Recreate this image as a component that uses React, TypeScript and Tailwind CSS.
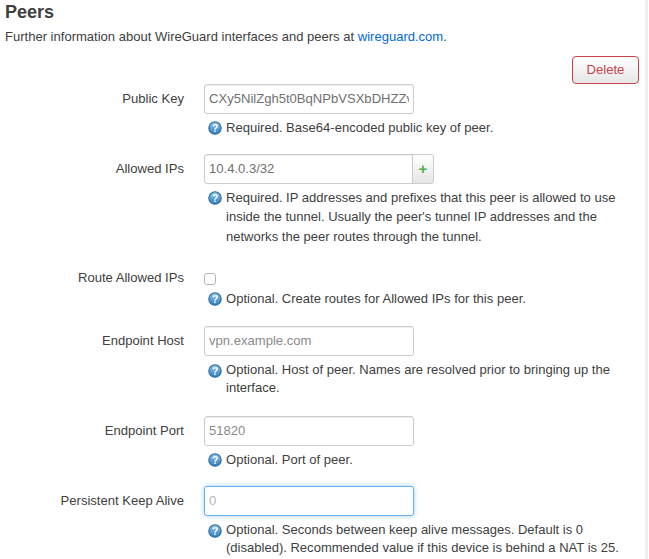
// Peers section of the WireGuard interface settings page

function HelpIcon() {
  return (
    <svg viewBox="0 0 14 14" className="w-[14px] h-[14px] shrink-0 mt-[3px]">
      <defs>
        <linearGradient id="help" x1="0" y1="0" x2="0" y2="1">
          <stop offset="0" stopColor="#8fc3e8" />
          <stop offset="1" stopColor="#2f7fc0" />
        </linearGradient>
      </defs>
      <circle cx="7" cy="7" r="6.2" fill="url(#help)" stroke="#2f6a99" strokeWidth="1.1" />
      <text x="7" y="10.6" textAnchor="middle" fontSize="10" fontWeight="700" fill="#fff" fontFamily="Liberation Sans, sans-serif">?</text>
    </svg>
  );
}

function Help({ lines, tight }: { lines: string[]; tight?: boolean }) {
  return (
    <div className={`flex gap-[4px] ml-[4px] text-[13.04px] text-[#404040] ${tight ? "mt-[5px] leading-[18px]" : "mt-[4px] leading-[19.5px]"}`}>
      <HelpIcon />
      <div>
        {lines.map((line) => (
          <div key={line} className="whitespace-nowrap">{line}</div>
        ))}
      </div>
    </div>
  );
}

interface RowProps {
  label: string;
  lines: string[];
  children: React.ReactNode;
  className?: string;
  tight?: boolean;
}

function Row({ label, lines, children, className, tight }: RowProps) {
  return (
    <div className={`flex ${className ?? ""}`}>
      <div className="w-[184px] shrink-0 text-right text-[13.07px] leading-[29px] text-[#404040]">{label}</div>
      <div className="ml-[20px]">
        {children}
        <Help lines={lines} tight={tight} />
      </div>
    </div>
  );
}

function TextInput({ value, placeholder, focused }: { value?: string; placeholder?: string; focused?: boolean }) {
  return (
    <div
      className={`w-[210px] h-[30px] px-[4px] rounded-[3px] border bg-white text-[13.07px] leading-[28px] ${
        focused
          ? "border-[#66afe9] shadow-[0_0_5px_rgba(102,175,233,0.6)] text-[#b5b5b5]"
          : "border-[#ccc] shadow-[inset_0_1px_1px_rgba(0,0,0,0.07)] " + (value ? "text-[#707070]" : "text-[#8a8a8a]")
      }`}
    >
      <div className="overflow-hidden whitespace-nowrap">{value ?? placeholder}</div>
    </div>
  );
}

export default function App() {
  return (
    <div className="relative w-[649px] h-[559px] overflow-hidden bg-white font-['Liberation_Sans',Arial,sans-serif] text-[#404040]">
      <div className="absolute right-[1px] top-0 bottom-0 w-[3px] bg-[#eee]" />

      <h3 className="pl-[5px] pt-[1px] text-[18px] leading-[22px] font-bold text-[#404040]">Peers</h3>
      <p className="pl-[5px] mt-[4px] text-[13.04px] leading-[20px]">
        Further information about WireGuard interfaces and peers at{" "}
        <a className="text-[#0069d6]">wireguard.com</a>.
      </p>

      <div className="flex justify-end mt-[9px] pr-[10px]">
        <button className="w-[67px] h-[28px] rounded-[4px] border border-[#c9434a] bg-gradient-to-b from-white to-[#e6e6e6] text-[13.07px] text-[#c9434a]">
          Delete
        </button>
      </div>

      <Row
        label="Public Key"
        lines={["Required. Base64-encoded public key of peer."]}
      >
        <TextInput value="CXy5NilZgh5t0BqNPbVSXbDHZZv" />
      </Row>

      <Row
        className="mt-[16px]"
        label="Allowed IPs"
        lines={[
          "Required. IP addresses and prefixes that this peer is allowed to use",
          "inside the tunnel. Usually the peer's tunnel IP addresses and the",
          "networks the peer routes through the tunnel.",
        ]}
      >
        <div className="flex">
          <div className="w-[209px] h-[30px] px-[4px] rounded-l-[3px] border border-[#ccc] bg-white text-[13.07px] leading-[28px] text-[#707070] shadow-[inset_0_1px_1px_rgba(0,0,0,0.07)]">
            10.4.0.3/32
          </div>
          <button className="w-[22px] h-[30px] -ml-px rounded-r-[3px] border border-[#ccc] bg-gradient-to-b from-white to-[#e6e6e6] text-[15px] leading-[26px] font-bold text-[#4cae4c]">
            +
          </button>
        </div>
      </Row>

      <Row
        className="mt-[17px]"
        label="Route Allowed IPs"
        lines={["Optional. Create routes for Allowed IPs for this peer."]}
      >
        <div className="h-[22px] pt-[10px]">
          <span className="block w-[12px] h-[12px] rounded-[3px] border border-[#b5b5b5] bg-white" />
        </div>
      </Row>

      <Row
        className="mt-[17px]"
        tight
        label="Endpoint Host"
        lines={[
          "Optional. Host of peer. Names are resolved prior to bringing up the",
          "interface.",
        ]}
      >
        <TextInput placeholder="vpn.example.com" />
      </Row>

      <Row
        className="mt-[19px]"
        label="Endpoint Port"
        lines={["Optional. Port of peer."]}
      >
        <TextInput placeholder="51820" />
      </Row>

      <Row
        className="mt-[17px]"
        tight
        label="Persistent Keep Alive"
        lines={[
          "Optional. Seconds between keep alive messages. Default is 0",
          "(disabled). Recommended value if this device is behind a NAT is 25.",
        ]}
      >
        <TextInput placeholder="0" focused />
      </Row>
    </div>
  );
}
